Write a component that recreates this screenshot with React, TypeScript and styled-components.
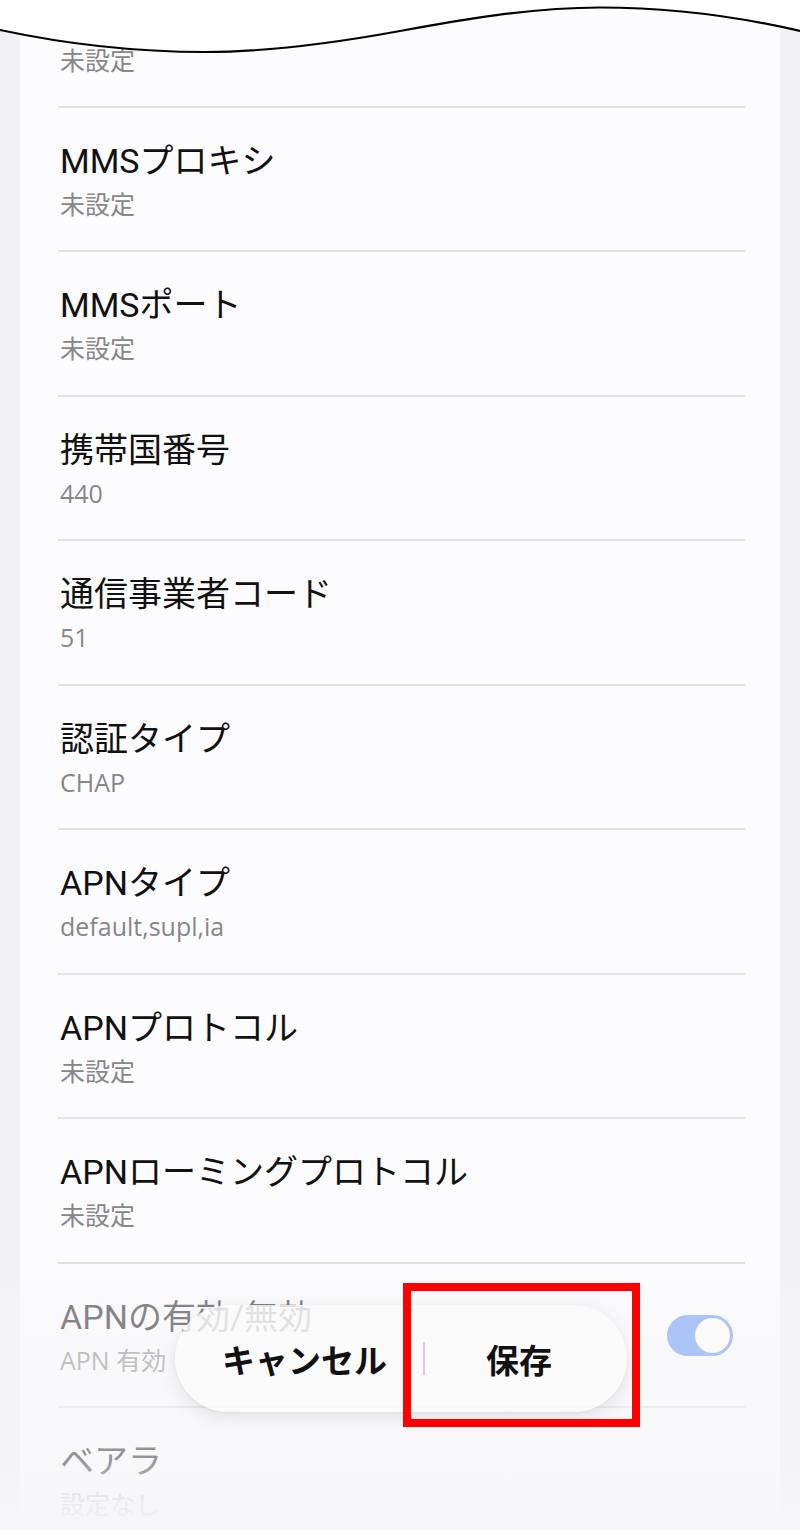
import React from 'react';
import styled, { createGlobalStyle } from 'styled-components';

const GlobalStyle = createGlobalStyle`
    html, body {
        margin: 0;
        padding: 0;
        background: #f1f1f3;
    }
    * {
        box-sizing: border-box;
    }
`;

const Screen = styled.div`
    position: relative;
    width: 800px;
    height: 1530px;
    overflow: hidden;
    background: #f1f1f3;
    font-family: Roboto, 'Noto Sans CJK JP', sans-serif;
`;

const Card = styled.div`
    margin: 0 20px;
    height: 100%;
    background: #fcfcfe;
    overflow: hidden;
`;

// list is scrolled, the first row sits partly above the top edge
const List = styled.ul`
    list-style: none;
    margin: -36.44px 0 0;
    padding: 0;
`;

const Row = styled.li`
    height: 144.44px;
    margin: 0 35px 0 38px;
    padding: 31px 0 0 2px;
    border-bottom: 2px solid #e2e2e4;
    display: flex;
    align-items: flex-start;
`;

const Texts = styled.div`
    flex: 1;
    display: flex;
    flex-direction: column;
`;

const Title = styled.div`
    height: 44px;
    font-size: 34px;
    line-height: 44px;
    color: #111111;
    white-space: nowrap;
`;

const Value = styled.div`
    font-family: 'Open Sans', 'Noto Sans CJK JP', sans-serif;
    font-size: 25px;
    line-height: 42px;
    color: #878787;
    white-space: nowrap;
`;

const Toggle = styled.div<{ on: boolean }>`
    width: 66px;
    height: 41px;
    margin: 20px 12px 0 0;
    border-radius: 21px;
    background: ${(p) => (p.on ? '#5f90f7' : '#c8c8c8')};
    display: flex;
    align-items: center;
    justify-content: ${(p) => (p.on ? 'flex-end' : 'flex-start')};
    padding: 0 3px;

    &::after {
        content: '';
        width: 35px;
        height: 35px;
        border-radius: 50%;
        background: #ffffff;
    }
`;

const Wave = styled.svg`
    position: absolute;
    top: 0;
    left: 0;
    width: 800px;
    height: 60px;
`;

const Fade = styled.div`
    position: absolute;
    left: 0;
    right: 0;
    top: 1262px;
    bottom: 0;
    background: linear-gradient(
        to bottom,
        rgba(246, 246, 248, 0) 0px,
        rgba(246, 246, 248, 0) 12px,
        rgba(246, 246, 248, 0.5) 36px,
        rgba(246, 246, 248, 0.52) 150px,
        rgba(246, 246, 248, 0.58) 200px,
        rgba(246, 246, 248, 0.9) 240px,
        rgba(246, 246, 248, 0.97) 268px
    );
`;

const ActionBar = styled.div`
    position: absolute;
    left: 175px;
    top: 1305px;
    width: 452px;
    height: 107px;
    border-radius: 54px;
    background: rgba(251, 251, 253, 0.78);
    box-shadow: 0 6px 18px rgba(0, 0, 0, 0.09), 0 1px 3px rgba(0, 0, 0, 0.04);
    display: flex;
    align-items: center;
`;

const ActionButton = styled.button<{ grow?: boolean }>`
    border: none;
    background: none;
    height: 100%;
    flex: ${(p) => (p.grow ? 1 : 'none')};
    padding: ${(p) => (p.grow ? '0 14px 0 0' : '0 36px 0 47px')};
    font-family: 'Noto Sans CJK JP', sans-serif;
    font-size: 33px;
    font-weight: 700;
    color: #111111;
    display: flex;
    align-items: center;
    justify-content: center;
`;

const Separator = styled.div`
    width: 2px;
    height: 33px;
    background: #f0c0ec;
`;

const Highlight = styled.div`
    position: absolute;
    left: 403px;
    top: 1283px;
    width: 237px;
    height: 144px;
    border: 8px solid #ff0000;
`;

type Item = { title?: string; value: string; toggle?: boolean };

// the first row's title is scrolled away under the torn edge
const items: Item[] = [
    { value: '未設定' },
    { title: 'MMSプロキシ', value: '未設定' },
    { title: 'MMSポート', value: '未設定' },
    { title: '携帯国番号', value: '440' },
    { title: '通信事業者コード', value: '51' },
    { title: '認証タイプ', value: 'CHAP' },
    { title: 'APNタイプ', value: 'default,supl,ia' },
    { title: 'APNプロトコル', value: '未設定' },
    { title: 'APNローミングプロトコル', value: '未設定' },
    { title: 'APNの有効/無効', value: 'APN 有効', toggle: true },
    { title: 'ベアラ', value: '設定なし' },
];

const App: React.FC = () => {
    return (
        <Screen>
            <GlobalStyle />
            <Card>
                <List>
                    {items.map((item, i) => (
                        <Row key={i}>
                            <Texts>
                                <Title>{item.title}</Title>
                                <Value>{item.value}</Value>
                            </Texts>
                            {item.toggle && <Toggle on />}
                        </Row>
                    ))}
                </List>
            </Card>

            {/* torn edge of the screenshot */}
            <Wave viewBox="0 0 800 60">
                <path
                    d="M0,0 H800 V31 C740,17 670,7.5 600,7.5 C530,7.5 460,20 400,31 C340,42 270,52 205,52 C140,52 70,45 0,30 Z"
                    fill="#ffffff"
                />
                <path
                    d="M0,30 C70,45 140,52 205,52 C270,52 340,42 400,31 C460,20 530,7.5 600,7.5 C670,7.5 740,17 800,31"
                    fill="none"
                    stroke="#000000"
                    strokeWidth="2.2"
                />
            </Wave>

            <Fade />

            <ActionBar>
                <ActionButton>キャンセル</ActionButton>
                <Separator />
                <ActionButton grow>保存</ActionButton>
            </ActionBar>

            <Highlight />
        </Screen>
    );
};

export default App;
